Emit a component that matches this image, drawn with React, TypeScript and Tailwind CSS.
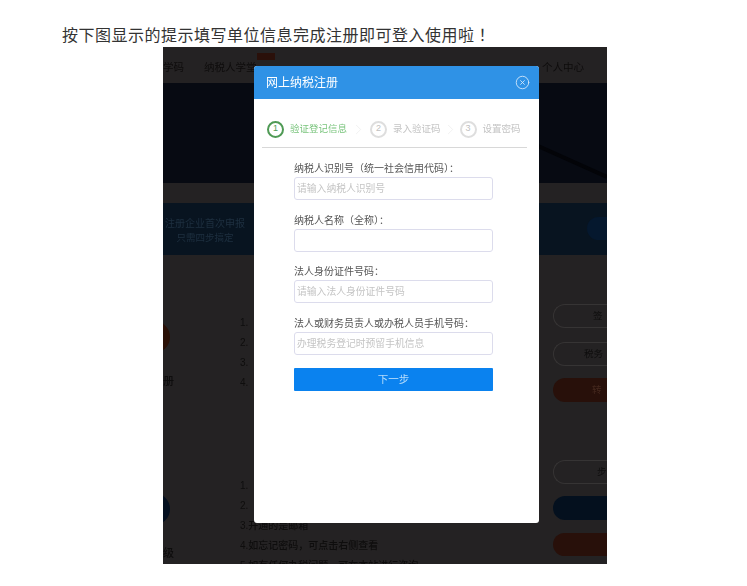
import { ChevronRight, CircleX } from "lucide-react";

const cjk = "font-['Liberation_Sans','Noto_Sans_CJK_SC',sans-serif]";

function Field({ label, hint }: { label: string; hint?: string }) {
  return (
    <div className="mb-[13.5px]">
      <p className="text-[10px] leading-[14px] text-[#555] mb-[1px] blur-[0.2px]">{label}</p>
      <input
        readOnly
        placeholder={hint}
        className="block h-[23px] w-[199px] border border-[#dcdcec] rounded-[3px] px-[2px] text-[9.8px] placeholder:text-[#c4c4c4] blur-[0.3px] outline-none"
      />
    </div>
  );
}

function Step({ n, text, active }: { n: number; text: string; active?: boolean }) {
  return (
    <div className="flex items-center">
      <span className={"flex items-center justify-center rounded-full w-[17px] h-[17px] text-[9px] " + (active ? "border-2 border-[#4f9a55] text-[#4f9a55]" : "border-2 border-[#dedede] text-[#c0c0c0]")}>{n}</span>
      <span className={"ml-[6px] text-[9.5px] blur-[0.4px] " + (active ? "text-[#79c47c]" : "text-[#c4c4c4]")}>{text}</span>
    </div>
  );
}

export default function App() {
  return (
    <div className={"bg-white h-[586px] overflow-hidden " + cjk}>
      <p className="pl-[62px] pt-[24px] h-[47px] text-[16px] leading-[20px] tracking-[0.5px] text-[#333]">
        按下图显示的提示填写单位信息完成注册即可登入使用啦<span className="font-['Noto_Sans_CJK_TC',sans-serif]">！</span>
      </p>

      <div className="relative ml-[163px] w-[444px] h-[517px] bg-[#242223] overflow-hidden">
        {/* dimmed page behind the dialog */}
        <div className="blur-[0.7px]">
          <div className="relative h-[36px] pt-[6px] flex items-center text-[10.5px] text-[#0e0c0c] whitespace-nowrap">
            <span>学码</span>
            <span className="ml-[20px]">纳税人学堂</span>
            <span className="ml-auto mr-[23px]">个人中心</span>
            <div className="absolute left-[94px] top-[6px] w-[18px] h-[7px] bg-[#2a100a]" />
          </div>
          <div className="relative h-[100px] bg-[#070a12] overflow-hidden">
            <svg className="absolute right-0 bottom-0" width="80" height="50" viewBox="0 0 80 50">
              <path d="M0 8 L80 44" stroke="#030408" strokeWidth="4" fill="none" />
            </svg>
          </div>
          <div className="h-[20px]" />
          <div className="h-[52px] bg-[#081420] flex text-[#1e3040] text-[10px] whitespace-nowrap">
            <div className="text-center leading-[14px] pt-[14px] pl-[2px]">
              <p>注册企业首次申报</p>
              <p className="text-[9.5px]">只需四步搞定</p>
            </div>
            <span className="ml-auto mt-[19px] mr-[54px] text-[#0e0c0c]">二口</span>
            <div className="mt-[14px] h-[23px] w-[20px] rounded-l-full bg-[#05182e]" />
          </div>
          <div className="flex pt-[58px] text-[10px] font-medium text-[#0e0d0d] whitespace-nowrap">
            <div className="w-[77px] shrink-0">
              <div className="w-[32px] h-[32px] ml-[-25px] mt-[8px] rounded-full bg-[#2a1006]" />
              <p className="mt-[20px] text-[11px]">册</p>
            </div>
            <div className="leading-[20px]">
              <p>1.</p>
              <p>2.</p>
              <p>3.</p>
              <p>4.</p>
            </div>
          </div>
          <div className="flex pt-[83px] text-[10px] font-medium text-[#0e0d0d] whitespace-nowrap">
            <div className="w-[77px] shrink-0">
              <div className="w-[32px] h-[32px] ml-[-25px] mt-[17px] rounded-full bg-[#041020]" />
              <p className="mt-[20px] text-[11px]">级</p>
            </div>
            <div className="leading-[20px]">
              <p>1.</p>
              <p>2.</p>
              <p>3.开通的是邮箱</p>
              <p>4.如忘记密码，可点击右侧查看</p>
              <p>5.如有任何办税问题，可在本站进行咨询</p>
            </div>
          </div>
        </div>

        {/* right hand buttons of the page */}
        <div className="absolute right-0 top-[257px] w-[54px] flex flex-col blur-[0.7px] text-[9.5px] text-[#0e0d0d]">
          <div className="h-[24px] rounded-l-full border border-r-0 border-[#363434] pl-[39px] leading-[22px]">签</div>
          <div className="mt-[14px] h-[24px] rounded-l-full border border-r-0 border-[#363434] pl-[30px] leading-[22px] whitespace-nowrap">税务</div>
          <div className="mt-[12px] h-[24px] rounded-l-full bg-[#28100a] pl-[39px] leading-[24px] text-[#44281e]">转</div>
          <div className="mt-[58px] h-[24px] rounded-l-full border border-r-0 border-[#363434] pl-[43px] leading-[22px]">步</div>
          <div className="mt-[12px] h-[24px] rounded-l-full bg-[#04101e]" />
          <div className="mt-[13px] h-[23px] rounded-l-full bg-[#28100a]" />
        </div>

        {/* dialog */}
        <div className="absolute left-[91px] top-[19px] w-[285px] h-[457px] bg-white rounded-[3px] overflow-hidden flex flex-col">
          <div className="h-[33px] bg-[#2f92e6] flex items-center justify-between pl-[12px] pr-[9px] text-white">
            <span className="text-[12px] blur-[0.4px]">网上纳税注册</span>
            <CircleX size={15} strokeWidth={1.4} className="text-[#d5e8fa]" />
          </div>
          <div className="ml-[8px] mr-[12px] h-[49px] border-b border-[#d8d8d8] flex items-center pl-[5px] pt-[12px]">
            <Step n={1} text="验证登记信息" active />
            <ChevronRight size={17} strokeWidth={1} className="text-[#ececec] mx-[3px]" />
            <Step n={2} text="录入验证码" />
            <ChevronRight size={17} strokeWidth={1} className="text-[#ececec] mx-[1px]" />
            <Step n={3} text="设置密码" />
          </div>
          <div className="pl-[40px] pt-[14px]">
            <Field label="纳税人识别号（统一社会信用代码）：" hint="请输入纳税人识别号" />
            <Field label="纳税人名称（全称）：" />
            <Field label="法人身份证件号码：" hint="请输入法人身份证件号码" />
            <Field label="法人或财务员责人或办税人员手机号码：" hint="办理税务登记时预留手机信息" />
            <div className="w-[199px] h-[23px] bg-[#0a82ef] rounded-[1px] flex items-center justify-center text-[10.5px] text-[#b5dcfb] blur-[0.3px]">下一步</div>
          </div>
        </div>
      </div>
    </div>
  );
}
